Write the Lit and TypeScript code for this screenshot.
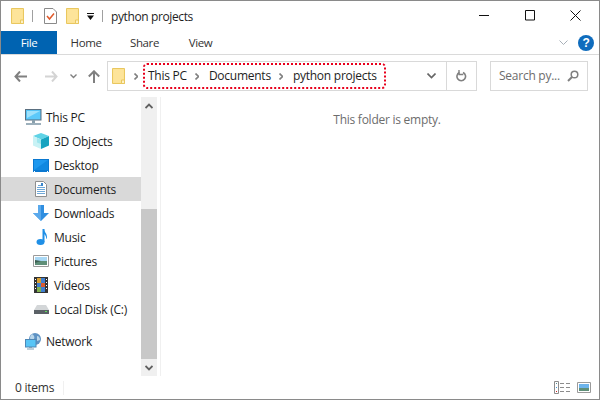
import { LitElement, html, css, svg } from "lit";
import { customElement } from "lit/decorators.js";

const folder = (w = 13, h = 16) => html`<svg width=${w} height=${h} viewBox="0 0 13 16"><path d="M.5.500h12v15H.5z" fill="#fce28f" stroke="#e9c75f"/><path d="M1.500 1.500h10v10h-2v3h-8z" fill="#fde49a"/><path d="M9.500 12h3v3.500h-3z" fill="#fdf1c4" stroke="#e9c75f"/></svg>`;

const icons: Record<string, unknown> = {
  pc: html`<svg width="17" height="16" viewBox="0 0 17 16"><rect x=".5" y=".5" width="15.500" height="10.500" fill="#55c3f5" stroke="#5a6f80"/><path d="M2 2h13v8H2z" fill="#5cc9fa"/><path d="M2 2h13L2 9z" fill="#9fe1fb"/><path d="M7 11h3v3H7z" fill="#8aa0ad"/><path d="M1 14h15v2H1z" fill="#9db0bc"/></svg>`,
  cube: html`<svg width="16" height="16" viewBox="0 0 16 16"><path d="M8 0 16 3 8 6.500 0 3z" fill="#5fd3e6"/><path d="M0 3 8 6.500V16L0 12.500z" fill="#c8f2f5"/><path d="M16 3 8 6.500V16l8-3.500z" fill="#15a3c0"/><path d="M4 5 8 6.500V11L4 9.500z" fill="#9fe6ee"/></svg>`,
  desk: html`<svg width="16" height="13" viewBox="0 0 16 13"><path d="M0 0h16v13H0z" fill="#0a78d0"/><path d="M1 1h14v10H1z" fill="#1e98ee"/><path d="M1 11 15 1v10z" fill="#1088e0"/><path d="M1 12h1v1H1zM14 12h1v1h-1z" fill="#fff"/></svg>`,
  doc: html`<svg width="12" height="16" viewBox="0 0 12 16"><path d="M.5.500h8l3 3v12H.5z" fill="#fff" stroke="#8f8f8f"/><path d="M3 4.500h3M2 6.500h8M2 8.500h8M2 10.500h8M2 12.500h8" stroke="#6fa8d8"/><path d="M6 2h2v3H6z" fill="#3a86cc"/></svg>`,
  down: html`<svg width="16" height="16" viewBox="0 0 16 16"><path d="M5 0h6v8h5l-8 8-8-8h5z" fill="#2f8ee0"/><path d="M5 0h3v16L0 8h5z" fill="#5aa9ec"/></svg>`,
  music: html`<svg width="11" height="16" viewBox="0 0 11 16"><ellipse cx="4.500" cy="13" rx="4" ry="3" fill="#1f8fe6"/><path d="M6.500 0h2v13h-2z" fill="#1f8fe6"/><path d="M8 0c0 3 3 4 3 8 0 1-.5 2-1 2 .5-2-.5-4-2-5z" fill="#1f8fe6"/></svg>`,
  pic: html`<svg width="16" height="12" viewBox="0 0 16 12"><path d="M.5.500h15v11H.5z" fill="#fff" stroke="#9a9a9a"/><path d="M2 2h12v4H2z" fill="#a9d8f5"/><path d="M2 6h12v4H2z" fill="#5f8f78"/><path d="M2 5l6 1-6 2z" fill="#3d5f52"/></svg>`,
  vid: html`<svg width="14" height="16" viewBox="0 0 14 16"><path d="M0 0h14v16H0z" fill="#333"/><path d="M3 1h8v14H3z" fill="#3f7fd0"/><path d="M3 1h4v5H3z" fill="#d8a030"/><path d="M7 6h4v4H7z" fill="#d85a30"/><path d="M3 10h4v5H3z" fill="#80b050"/><path d="M1 2h1v1H1zM1 5h1v1H1zM1 8h1v1H1zM1 11h1v1H1zM12 2h1v1h-1zM12 5h1v1h-1zM12 8h1v1h-1zM12 11h1v1h-1z" fill="#fff"/></svg>`,
  disk: html`<svg width="15" height="9" viewBox="0 0 15 9"><path d="M3 0h9l3 5H0z" fill="#d3d6d8"/><path d="M0 5h15v4H0z" fill="#5b6166"/><path d="M11 6h2v1h-2z" fill="#5fe05f"/></svg>`,
  net: html`<svg width="17" height="17" viewBox="0 0 17 17"><circle cx="10" cy="6" r="6" fill="#5f93c4"/><path d="M7 1c2 1 3 3 2 5S5 7 5 5s1-3 2-4zM12 3c2 0 3 2 3 4l-3 1z" fill="#b9d6ea"/><rect x=".5" y="6.500" width="10.500" height="7.500" fill="#58c5f6" stroke="#4f87b5"/><path d="M4 14h3v1H4zM2 15.500h7v1H2z" fill="#7fa0b5"/></svg>`,
};

const rows = [
  { t: "This PC", i: "pc", lv: 0 },
  { t: "3D Objects", i: "cube", lv: 1 },
  { t: "Desktop", i: "desk", lv: 1 },
  { t: "Documents", i: "doc", lv: 1, sel: true },
  { t: "Downloads", i: "down", lv: 1 },
  { t: "Music", i: "music", lv: 1 },
  { t: "Pictures", i: "pic", lv: 1 },
  { t: "Videos", i: "vid", lv: 1 },
  { t: "Local Disk (C:)", i: "disk", lv: 1 },
];

const chev = (d: string, c = "#808080", w = 1.600) => svg`<path d=${d} fill="none" stroke=${c} stroke-width=${w}/>`;

@customElement("app-root")
export class AppRoot extends LitElement {
  static styles = css`
    :host { display: block; width: 600px; height: 400px; }
    * { box-sizing: border-box; }
    .win { width: 600px; height: 400px; border: 1px solid #8a8a8a; background: #fff; display: flex; flex-direction: column; font: 12px/16px "Open Sans", "Noto Sans", sans-serif; color: #1e1e1e; letter-spacing: -0.25px; overflow: hidden; }
    svg { display: block; flex: none; }
    .title { height: 30px; display: flex; align-items: center; padding-left: 10px; flex: none; }
    .title .sep { width: 1px; height: 12px; background: #a0a0a0; }
    .check { margin: 0 0 0 11px; }
    .title .f2 { margin-left: 9px; }
    .title .qa { margin: 0 0 0 8px; }
    .title .sep.a { margin-left: 8px; }
    .title .sep.b { margin-left: 8px; }
    .name { margin-left: 8px; flex: 1; padding-top: 1px; font-size: 12px; letter-spacing: -0.38px; }
    .ctrl { display: flex; align-items: center; margin-right: 18px; gap: 35px; margin-top: -1px; }
    .tabs { height: 24px; flex: none; display: flex; border-bottom: 1px solid #dadada; align-items: stretch; font-size: 11.5px; letter-spacing: -0.4px; }
    .tab { display: flex; align-items: center; justify-content: center; color: #333; }
    .tab.file { width: 56px; background: #0063b1; color: #fff; }
    .tab.home { width: 58px; }
    .tab.share { width: 59px; }
    .tab.view { width: 48px; padding-left: 5px; }
    .tabs .sp { flex: 1; }
    .help { margin: 3px 5px 0 0; display: flex; gap: 10px; align-items: center; height: 18px; }
    .addr { height: 42px; flex: none; display: flex; align-items: center; }
    .nav { width: 106px; flex: none; display: flex; align-items: center; padding-left: 13px; }
    .box { height: 30px; border: 1px solid #d9d9d9; display: flex; align-items: center; }
    .path { width: 370px; }
    .path .ic { margin-left: 4px; }
    .crumbs { position: relative; display: flex; align-items: center; flex: 1; height: 100%; padding-left: 3px; }
    .crumb { white-space: nowrap; }
    .ring { position: absolute; left: 18px; top: 1px; }
    .drop { width: 30px; display: flex; justify-content: center; flex: none; }
    .refresh { width: 30px; height: 100%; border-left: 1px solid #d9d9d9; display: flex; align-items: center; justify-content: center; flex: none; }
    .search { width: 98px; margin-left: 13px; padding: 0 8px; justify-content: space-between; color: #6d6d6d; }
    .main { flex: 1; display: flex; min-height: 0; }
    .side { width: 140px; flex: none; padding-top: 8px; }
    .row { height: 24px; display: flex; align-items: center; white-space: nowrap; }
    .row.sel { background: #d9d9d9; }
    .row .ii { width: 18px; display: flex; justify-content: center; margin-right: 4px; flex: none; }
    .row .lbl { margin-top: 2px; }
    .row.lv0 { padding-left: 23px; }
    .row.lv1 { padding-left: 31px; }
    .row.net { margin-top: 8px; }
    .sb { width: 16px; flex: none; display: flex; flex-direction: column; background: #f0f0f0; }
    .sb .btn { height: 17px; display: flex; align-items: center; justify-content: center; flex: none; }
    .sb .gap { height: 95px; flex: none; }
    .sb .thumb { flex: 1; background: #c8c8c8; }
    .rule { width: 1px; background: #f0f0f0; margin-left: 3px; flex: none; }
    .content { flex: 1; text-align: center; padding-top: 15px; color: #6d6d6d; padding-left: 14px; }
    .status { height: 23px; flex: none; display: flex; align-items: center; padding-left: 14px; color: #333; }
    .status .div { width: 1px; height: 14px; background: #f0f0f0; margin-left: 9px; }
    .status .sp { flex: 1; }
    .views { display: flex; align-items: center; gap: 7px; margin-right: 8px; }
    .fwd { margin-left: 18px; }
    .rec { margin-left: 12px; }
    .up { margin-left: 11px; }
    .cs { margin: 0 10px 0 8px; }
    .cs.first { margin-left: 6px; }
    .dn { margin-top: 0; }
  `;

  render() {
    return html`<div class="win">
      <div class="title">
        ${folder()}
        <span class="sep a"></span>
        <svg class="check" width="13" height="16" viewBox="0 0 13 16"><path d="M.5.500h8.500l3.500 3.500v11.500H.5z" fill="#fff" stroke="#8a8a8a"/><path d="M3 8l2.500 3L10 5.500" fill="none" stroke="#e0592a" stroke-width="1.500"/></svg>
        <span class="f2">${folder()}</span>
        <svg class="qa" width="7" height="7" viewBox="0 0 7 7"><path d="M0 0h7v1H0zM0 2.500h7L3.500 7z" fill="#111"/></svg>
        <span class="sep b"></span>
        <span class="name">python projects</span>
        <div class="ctrl">
          <svg width="11" height="11" viewBox="0 0 11 11"><path d="M0 5.500h10" stroke="#111"/></svg>
          <svg width="10" height="11" viewBox="0 0 10 11"><path d="M.5.500h9v9.500h-9z" fill="none" stroke="#111"/></svg>
          <svg width="11" height="11" viewBox="0 0 11 11"><path d="M.5.500l10 10M10.500.500l-10 10" stroke="#111"/></svg>
        </div>
      </div>
      <div class="tabs">
        <div class="tab file">File</div>
        <div class="tab home">Home</div>
        <div class="tab share">Share</div>
        <div class="tab view">View</div>
        <div class="sp"></div>
        <div class="help">
          <svg width="9" height="6" viewBox="0 0 9 6">${chev("M.5.500l4 4 4-4", "#a8b0b8", 1)}</svg>
          <svg width="16" height="16" viewBox="0 0 16 16"><circle cx="8" cy="8" r="8" fill="#0f6cbd"/><text x="8" y="12" text-anchor="middle" font-size="12" font-weight="700" font-family="Liberation Sans" fill="#fff">?</text></svg>
        </div>
      </div>
      <div class="addr">
        <div class="nav">
          <svg width="13" height="11" viewBox="0 0 13 11"><path d="M6 .500 1.500 5.500 6 10.500M2 5.500h11" fill="none" stroke="#808080" stroke-width="2"/></svg>
          <svg class="fwd" width="13" height="11" viewBox="0 0 13 11"><path d="M7 .500l4.500 5-4.500 5M11 5.500H0" fill="none" stroke="#d4d4d4" stroke-width="2"/></svg>
          <svg class="rec" width="7" height="5" viewBox="0 0 7 5">${chev("M.5.500l3 3 3-3", "#808080", 1.400)}</svg>
          <svg class="up" width="12" height="13" viewBox="0 0 12 13"><path d="M.8 6.500 6 1.300l5.200 5.200M6 2v11" fill="none" stroke="#808080" stroke-width="2"/></svg>
        </div>
        <div class="box path">
          <span class="ic">${folder()}</span>
          <div class="crumbs">
            <svg class="cs first" width="4" height="7" viewBox="0 0 4 7">${chev("M.5.500l3 3-3 3")}</svg>
            <span class="crumb">This PC</span>
            <svg class="cs" width="4" height="7" viewBox="0 0 4 7">${chev("M.5.500l3 3-3 3")}</svg>
            <span class="crumb">Documents</span>
            <svg class="cs" width="4" height="7" viewBox="0 0 4 7">${chev("M.5.500l3 3-3 3")}</svg>
            <span class="crumb">python projects</span>
            <svg class="ring" width="243" height="26" viewBox="0 0 243 26"><rect x="1" y="1" width="241" height="24" rx="3" fill="none" stroke="#e8001c" stroke-width="2" stroke-dasharray="2 2"/></svg>
          </div>
          <div class="drop"><svg width="9" height="6" viewBox="0 0 9 6">${chev("M.5.500l4 4 4-4", "#666", 1.600)}</svg></div>
          <div class="refresh"><svg width="11" height="13" viewBox="0 0 11 13"><path d="M7 2.500a4.300 4.300 0 1 1-3.500 0" fill="none" stroke="#808080" stroke-width="1.600"/><path d="M3 0v4.500h4.300" fill="none" stroke="#808080" stroke-width="1.400"/></svg></div>
        </div>
        <div class="box search">
          <span>Search py...</span>
          <svg width="12" height="12" viewBox="0 0 12 12"><circle cx="7.500" cy="4.500" r="3.300" fill="none" stroke="#808080" stroke-width="1.500"/><path d="M5 7l-4 4" stroke="#808080" stroke-width="2"/></svg>
        </div>
      </div>
      <div class="main">
        <div class="side">
          ${rows.map((r) => html`<div class="row lv${r.lv} ${r.sel ? "sel" : ""}"><span class="ii">${icons[r.i]}</span><span class="lbl">${r.t}</span></div>`)}
          <div class="row lv0 net"><span class="ii">${icons.net}</span><span class="lbl">Network</span></div>
        </div>
        <div class="sb">
          <div class="btn"><svg width="8" height="6" viewBox="0 0 8 6">${chev("M.5 5l3.500-3.500L7.500 5", "#606060", 1.800)}</svg></div>
          <div class="gap"></div>
          <div class="thumb"></div>
          <div class="btn"><svg width="8" height="6" viewBox="0 0 8 6">${chev("M.5 1L4 4.500 7.500 1", "#606060", 1.800)}</svg></div>
        </div>
        <div class="rule"></div>
        <div class="content">This folder is empty.</div>
      </div>
      <div class="status">
        <span>0 items</span><span class="div"></span><span class="sp"></span>
        <div class="views">
          <svg width="16" height="13" viewBox="0 0 16 13"><path d="M.5.500h4v12h-4z" fill="#fff" stroke="#8c8c8c"/><path d="M2 2h1v1H2z" fill="#5a8f9a"/><path d="M2 6h1v1H2z" fill="#3a9ae0"/><path d="M2 10h1v1H2z" fill="#d02020"/><path d="M6 2.500h4M12 2.500h4M6 6.500h4M12 6.500h4M6 10.500h4M12 10.500h4" stroke="#8c8c8c"/></svg>
          <svg width="14" height="11" viewBox="0 0 14 11"><path d="M.5.500h13v10H.5z" fill="#fff" stroke="#9a9a9a"/><path d="M2 2h10v4H2z" fill="#6db4ec"/><path d="M2 6h10v3H2z" fill="#5f8f78"/></svg>
        </div>
      </div>
    </div>`;
  }
}
